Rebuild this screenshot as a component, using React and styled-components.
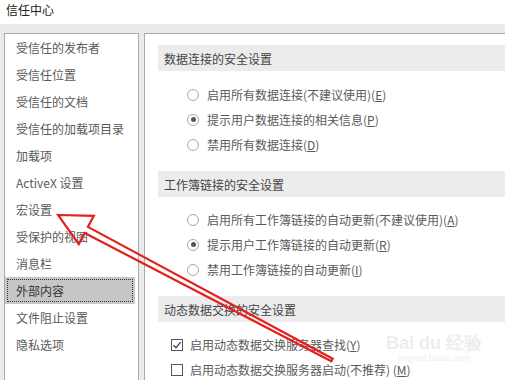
import React from "react";
import styled, { createGlobalStyle } from "styled-components";

const Global = createGlobalStyle`
  html, body { margin: 0; padding: 0; }
  body {
    font-family: "Noto Sans CJK SC", "Noto Sans", sans-serif;
    background: #ebebeb;
  }
`;

const Window = styled.div`
  position: relative;
  width: 505px;
  height: 380px;
  overflow: hidden;
  background: #ebebeb;
  display: flex;
  flex-direction: column;
`;

const TitleBar = styled.div`
  height: 24px;
  flex: none;
  background: #ffffff;
  display: flex;
  align-items: center;
  padding-left: 6px;
  padding-bottom: 5px;
  box-sizing: border-box;
  font-size: 12px;
  color: #222;
`;

const Body = styled.div`
  display: flex;
  gap: 5px;
  padding: 9px 0 0 4px;
  flex: 1;
`;

const NavPanel = styled.div`
  width: 131px;
  height: 400px;
  flex: none;
  background: #fff;
  border: 1px solid #a9a9a9;
  border-bottom: none;
  padding-right: 2px;
`;

const NavItem = styled.div`
  height: 27px;
  display: flex;
  align-items: center;
  padding-left: 11px;
  font-size: 12px;
  color: ${(p) => (p.$selected ? "#333" : "#5a5a5a")};
  background: ${(p) => (p.$selected ? "#c6c6c6" : "transparent")};
  outline: ${(p) => (p.$selected ? "1px dotted #333" : "none")};
  outline-offset: -3px;
  margin-right: 1px;
`;

const Content = styled.div`
  flex: 1;
  height: 400px;
  background: #fff;
  border: 1px solid #a9a9a9;
  border-right: none;
  border-bottom: none;
  padding: 11px 0 0 13px;
`;

const Section = styled.div`
  margin-bottom: 14px;
`;

const SectionHeader = styled.div`
  height: 26px;
  background: #ececec;
  display: flex;
  align-items: center;
  padding-left: 6px;
  font-size: 12px;
  color: #444;
`;

const Options = styled.div`
  padding-top: ${(p) => p.$top}px;
  padding-left: ${(p) => p.$indent}px;
`;

const Row = styled.div`
  height: 25px;
  display: flex;
  align-items: center;
  gap: 7px;
  font-size: 12px;
  color: #5a5a5a;
`;

const Radio = styled.span`
  width: 12px;
  height: 12px;
  box-sizing: border-box;
  border-radius: 50%;
  border: 1px solid #a8a8a8;
  background: #fff;
  display: inline-flex;
  align-items: center;
  justify-content: center;
  margin-right: 1px;
  &::after {
    content: "";
    width: 5px;
    height: 5px;
    border-radius: 50%;
    background: ${(p) => (p.$on ? "#555" : "transparent")};
  }
`;

const Check = styled.span`
  width: 12px;
  height: 12px;
  box-sizing: border-box;
  border: 1px solid #555;
  background: #fff;
  display: inline-flex;
  align-items: center;
  justify-content: center;
`;

const Key = styled.span`
  text-decoration: underline;
`;

const Overlay = styled.svg`
  position: absolute;
  left: 0;
  top: 0;
  pointer-events: none;
`;

const Watermark = styled.div`
  position: absolute;
  left: 384px;
  top: 334px;
  width: 100px;
  white-space: nowrap;
  color: rgba(215, 215, 215, 0.45);
  font-family: "Liberation Sans", sans-serif;
  pointer-events: none;
  display: flex;
  flex-direction: column;
  align-items: center;
  line-height: 1;
`;

const WmBig = styled.div`
  font-size: 18px;
  font-weight: bold;
`;

const WmSmall = styled.div`
  font-size: 9px;
  margin-top: 2px;
`;

const navItems = [
  "受信任的发布者",
  "受信任位置",
  "受信任的文档",
  "受信任的加载项目录",
  "加载项",
  "ActiveX 设置",
  "宏设置",
  "受保护的视图",
  "消息栏",
  "外部内容",
  "文件阻止设置",
  "隐私选项",
];

const sections = [
  {
    title: "数据连接的安全设置",
    kind: "radio",
    top: 11,
    items: [
      { text: "启用所有数据连接(不建议使用)(", key: "E", on: false },
      { text: "提示用户数据连接的相关信息(", key: "P", on: true },
      { text: "禁用所有数据连接(", key: "D", on: false },
    ],
  },
  {
    title: "工作簿链接的安全设置",
    kind: "radio",
    top: 10,
    items: [
      { text: "启用所有工作簿链接的自动更新(不建议使用)(", key: "A", on: false },
      { text: "提示用户工作簿链接的自动更新(", key: "R", on: true },
      { text: "禁用工作簿链接的自动更新(", key: "I", on: false },
    ],
  },
  {
    title: "动态数据交换的安全设置",
    kind: "check",
    top: 10,
    items: [
      { text: "启用动态数据交换服务器查找(", key: "Y", on: true },
      { text: "启用动态数据交换服务器启动(不推荐) (", key: "M", on: false },
    ],
  },
];

function CheckMark() {
  return (
    <svg width="10" height="10" viewBox="0 0 10 10">
      <path d="M1.5 5.2 L4 7.7 L8.6 2.2" fill="none" stroke="#444" strokeWidth="1.3" />
    </svg>
  );
}

export default function App() {
  const arrow =
    "58,215 93.8,215.9 87.9,226.9 332.7,358.7 331.3,361.3 84.7,233.1 78.8,244.1";
  return (
    <>
      <Global />
      <Window>
        <TitleBar>信任中心</TitleBar>
        <Body>
          <NavPanel>
            {navItems.map((t) => (
              <NavItem key={t} $selected={t === "外部内容"}>
                {t}
              </NavItem>
            ))}
          </NavPanel>
          <Content>
            {sections.map((s) => (
              <Section key={s.title}>
                <SectionHeader>{s.title}</SectionHeader>
                <Options $top={s.top} $indent={s.kind === "radio" ? 29 : 13}>
                  {s.items.map((it) => (
                    <Row key={it.key}>
                      {s.kind === "radio" ? (
                        <Radio $on={it.on} />
                      ) : (
                        <Check>{it.on && <CheckMark />}</Check>
                      )}
                      <span>
                        {it.text}
                        <Key>{it.key}</Key>)
                      </span>
                    </Row>
                  ))}
                </Options>
              </Section>
            ))}
          </Content>
        </Body>
        <Watermark>
          <WmBig>Bai du 经验</WmBig>
          <WmSmall>jingyan.baidu.com</WmSmall>
        </Watermark>
        <Overlay width="505" height="380" viewBox="0 0 505 380">
          <polygon
            points={arrow}
            fill="none"
            stroke="#e3201b"
            strokeWidth="2.2"
            strokeLinejoin="miter"
          />
        </Overlay>
      </Window>
    </>
  );
}
